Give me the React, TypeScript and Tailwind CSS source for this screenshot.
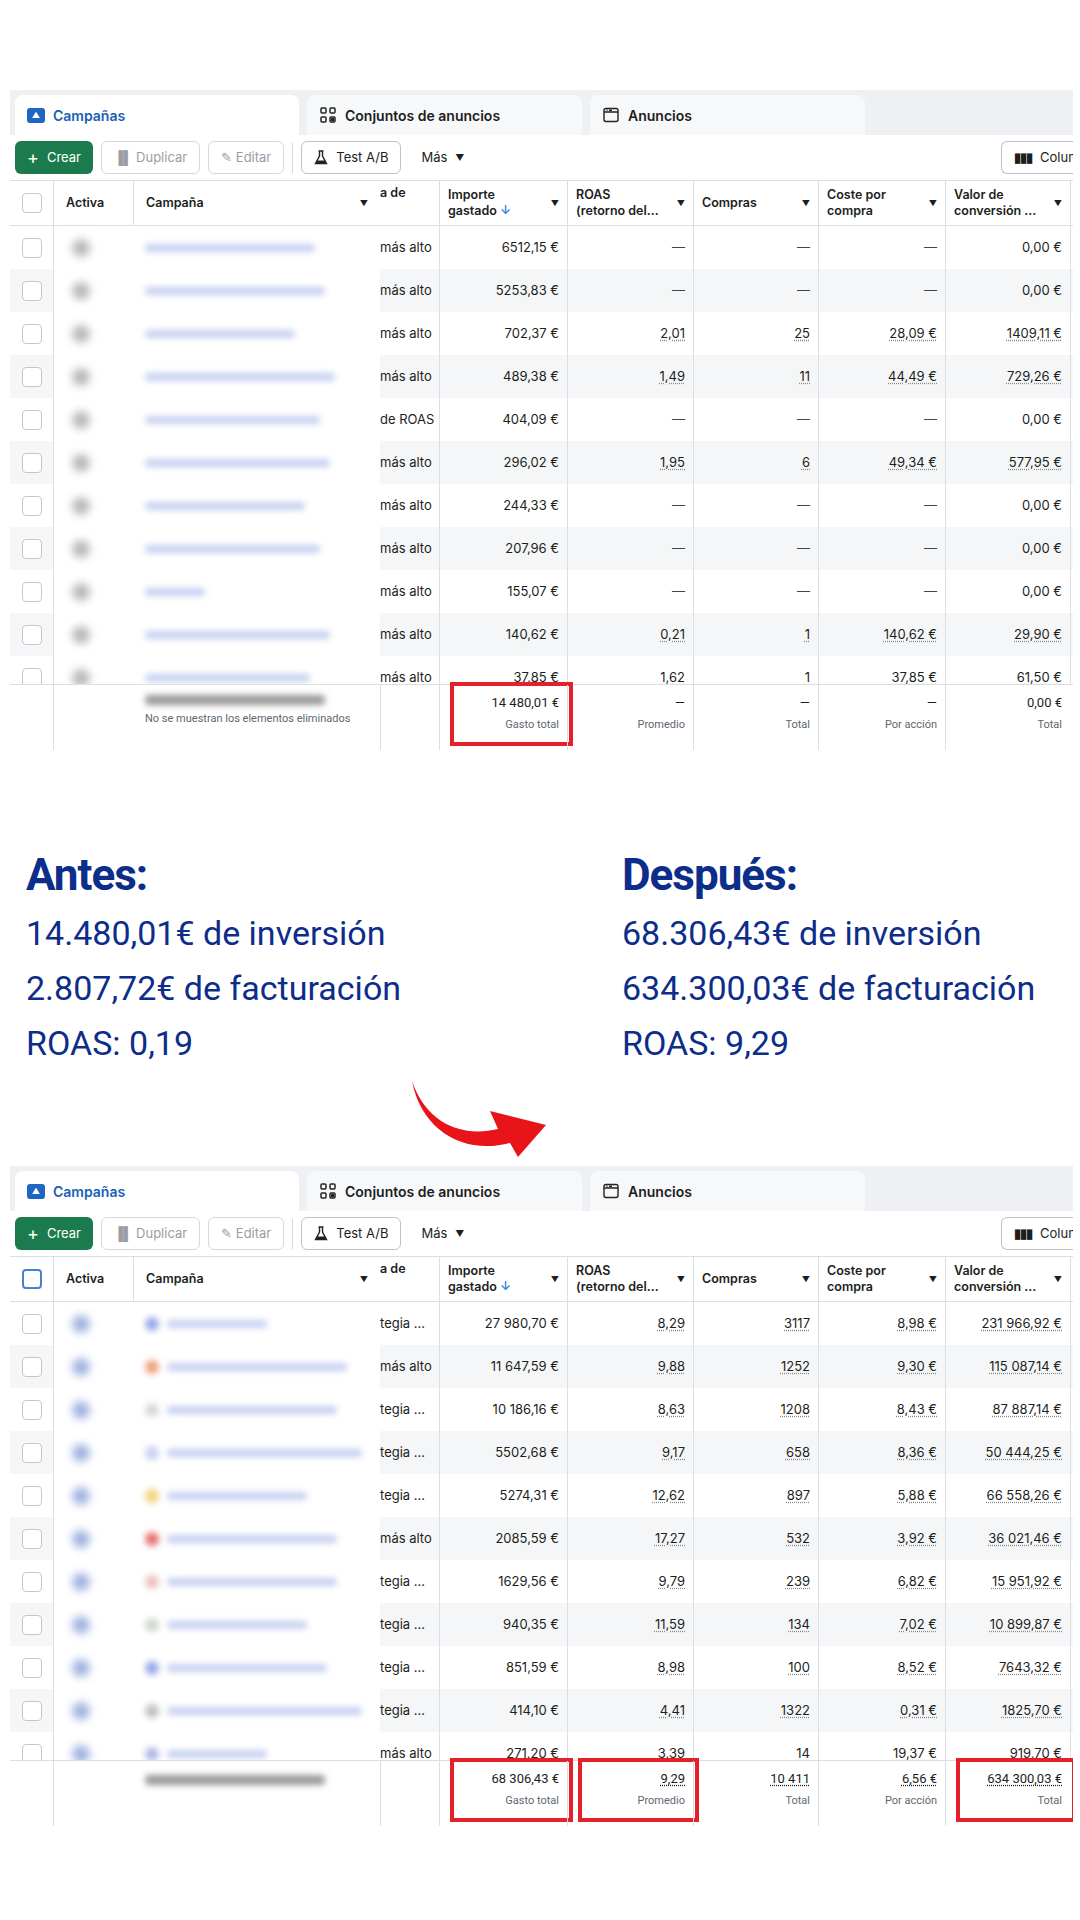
import React from "react";

type Row = { s: string; imp: string; roas: string; comp: string; coste: string; valor: string; dot?: string; bar?: number };

const top: Row[] = [
  { s: "más alto", imp: "6512,15 €", roas: "—", comp: "—", coste: "—", valor: "0,00 €", bar: 170 },
  { s: "más alto", imp: "5253,83 €", roas: "—", comp: "—", coste: "—", valor: "0,00 €", bar: 180 },
  { s: "más alto", imp: "702,37 €", roas: "2,01", comp: "25", coste: "28,09 €", valor: "1409,11 €", bar: 150 },
  { s: "más alto", imp: "489,38 €", roas: "1,49", comp: "11", coste: "44,49 €", valor: "729,26 €", bar: 190 },
  { s: "de ROAS", imp: "404,09 €", roas: "—", comp: "—", coste: "—", valor: "0,00 €", bar: 175 },
  { s: "más alto", imp: "296,02 €", roas: "1,95", comp: "6", coste: "49,34 €", valor: "577,95 €", bar: 185 },
  { s: "más alto", imp: "244,33 €", roas: "—", comp: "—", coste: "—", valor: "0,00 €", bar: 160 },
  { s: "más alto", imp: "207,96 €", roas: "—", comp: "—", coste: "—", valor: "0,00 €", bar: 175 },
  { s: "más alto", imp: "155,07 €", roas: "—", comp: "—", coste: "—", valor: "0,00 €", bar: 60 },
  { s: "más alto", imp: "140,62 €", roas: "0,21", comp: "1", coste: "140,62 €", valor: "29,90 €", bar: 185 },
  { s: "más alto", imp: "37,85 €", roas: "1,62", comp: "1", coste: "37,85 €", valor: "61,50 €", bar: 165 },
];
const bot: Row[] = [
  { s: "tegia ...", imp: "27 980,70 €", roas: "8,29", comp: "3117", coste: "8,98 €", valor: "231 966,92 €", dot: "#9aa9e8", bar: 100 },
  { s: "más alto", imp: "11 647,59 €", roas: "9,88", comp: "1252", coste: "9,30 €", valor: "115 087,14 €", dot: "#f0a080", bar: 180 },
  { s: "tegia ...", imp: "10 186,16 €", roas: "8,63", comp: "1208", coste: "8,43 €", valor: "87 887,14 €", dot: "#d8d8d8", bar: 170 },
  { s: "tegia ...", imp: "5502,68 €", roas: "9,17", comp: "658", coste: "8,36 €", valor: "50 444,25 €", dot: "#c8d0f0", bar: 195 },
  { s: "tegia ...", imp: "5274,31 €", roas: "12,62", comp: "897", coste: "5,88 €", valor: "66 558,26 €", dot: "#f5d27a", bar: 140 },
  { s: "más alto", imp: "2085,59 €", roas: "17,27", comp: "532", coste: "3,92 €", valor: "36 021,46 €", dot: "#e57070", bar: 170 },
  { s: "tegia ...", imp: "1629,56 €", roas: "9,79", comp: "239", coste: "6,82 €", valor: "15 951,92 €", dot: "#f0c0c0", bar: 170 },
  { s: "tegia ...", imp: "940,35 €", roas: "11,59", comp: "134", coste: "7,02 €", valor: "10 899,87 €", dot: "#d0d8d0", bar: 140 },
  { s: "tegia ...", imp: "851,59 €", roas: "8,98", comp: "100", coste: "8,52 €", valor: "7643,32 €", dot: "#9aa9e8", bar: 160 },
  { s: "tegia ...", imp: "414,10 €", roas: "4,41", comp: "1322", coste: "0,31 €", valor: "1825,70 €", dot: "#c0c0c0", bar: 195 },
  { s: "más alto", imp: "271,20 €", roas: "3,39", comp: "14", coste: "19,37 €", valor: "919,70 €", dot: "#b0b8e8", bar: 100 },
];

const cols = "grid grid-cols-[43px_80px_247px_59px_128px_126px_125px_127px_125px_40px]";

function Num({ v }: { v: string }) {
  if (v === "—") return <span className="text-[#444]">—</span>;
  return <span className="underline decoration-dotted decoration-[#888] underline-offset-2">{v}</span>;
}

function Box() {
  return <div className="box-border border-4 border-[#e4202a] w-full h-full" />;
}

function Panel({ rows, footer, blueCheck }: { rows: Row[]; footer: React.ReactNode; blueCheck?: boolean }) {
  const underline = rows !== top;
  return (
    <div className="ml-[10px] w-[1063px] overflow-hidden text-[13px] text-[#1c1e21]" style={{ fontFamily: "Inter, 'Noto Sans', sans-serif" }}>
      <div className="h-[45px] bg-[#eef0f3] flex items-end gap-[8px] pl-[5px]">
        <div className="h-[40px] w-[284px] bg-white rounded-t-lg flex items-center gap-2 px-3 font-semibold text-[14px] text-[#1a5fb4]">
          <span className="w-[18px] h-[15px] bg-[#1f66c1] rounded-[3px] text-white text-[8px] flex items-center justify-center">▲</span>Campañas
        </div>
        <div className="h-[40px] w-[275px] bg-[#f7f8fa] rounded-t-lg flex items-center gap-2 px-3 font-semibold text-[14px]">
          <svg width="18" height="18" viewBox="0 0 18 18" fill="none" stroke="#222" strokeWidth="1.5"><rect x="2" y="2" width="5" height="5" rx="1"/><rect x="11" y="2" width="5" height="5" rx="1"/><rect x="2" y="11" width="5" height="5" rx="1"/><rect x="11" y="11" width="5" height="5" rx="1"/><rect x="12.8" y="12.8" width="1.5" height="1.5" fill="#222"/></svg>
          Conjuntos de anuncios
        </div>
        <div className="h-[40px] w-[275px] bg-[#f7f8fa] rounded-t-lg flex items-center gap-2 px-3 font-semibold text-[14px]">
          <svg width="18" height="18" viewBox="0 0 18 18" fill="none" stroke="#222" strokeWidth="1.4"><rect x="2" y="2.5" width="14" height="13" rx="2"/><path d="M2 6h14M4.5 4.3h1M7 4.3h3"/></svg>
          Anuncios
        </div>
      </div>
      <div className="h-[45px] flex items-center gap-[8px] pl-[5px]">
        <div className="h-[33px] px-3 bg-[#1c7a4f] text-white rounded-md flex items-center gap-2"><span className="text-[18px] leading-none">+</span>Crear</div>
        <div className="h-[33px] px-3 border border-[#d6d8db] rounded-md flex items-center gap-2 text-[#9a9ea4]">▐▌ Duplicar</div>
        <div className="h-[33px] px-3 border border-[#d6d8db] rounded-md flex items-center gap-2 text-[#9a9ea4]">✎ Editar</div>
        <div className="w-px h-[30px] bg-[#d6d8db]" />
        <div className="h-[33px] px-3 border border-[#bfc2c6] rounded-md flex items-center gap-2">
          <svg width="14" height="15" viewBox="0 0 14 15"><path d="M4.5 1h5M5.5 1v5L1.5 13.5h11L8.5 6V1" fill="none" stroke="#222" strokeWidth="1.4"/><path d="M3 10.5h8l1.5 3h-11z" fill="#222"/></svg>Test A/B
        </div>
        <div className="px-3 flex items-center gap-2">Más <span className="text-[9px]">▼</span></div>
        <div className="ml-auto h-[33px] w-[72px] border border-[#bfc2c6] border-r-0 rounded-l-md flex items-center gap-2 pl-3 whitespace-nowrap overflow-hidden">
          <span className="font-bold tracking-[-1px]">▮▮▮</span>Colum
        </div>
      </div>
      <div className={`${cols} h-[46px] border-y border-[#dcdee1] font-semibold text-[12.5px] leading-[16px]`}>
        <div className="flex items-center justify-center"><span className={`w-[20px] h-[20px] rounded-[4px] border ${blueCheck ? "border-[#4a7fd6] border-2" : "border-[#c4c7cb]"}`} /></div>
        <div className="flex items-center pl-3 border-l border-[#dcdee1]">Activa</div>
        <div className="flex items-center justify-between px-3 border-l border-[#dcdee1]">Campaña<span className="text-[8px]">▼</span></div>
        <div className="pt-[4px]">a de</div>
        <div className="flex items-center justify-between px-2 border-l border-[#dcdee1]"><span>Importe<br/>gastado <span className="text-[#3b7fe0]">↓</span></span><span className="text-[8px]">▼</span></div>
        <div className="flex items-center justify-between px-2 border-l border-[#dcdee1]"><span>ROAS<br/>(retorno del...</span><span className="text-[8px]">▼</span></div>
        <div className="flex items-center justify-between px-2 border-l border-[#dcdee1]"><span>Compras</span><span className="text-[8px]">▼</span></div>
        <div className="flex items-center justify-between px-2 border-l border-[#dcdee1]"><span>Coste por<br/>compra</span><span className="text-[8px]">▼</span></div>
        <div className="flex items-center justify-between px-2 border-l border-[#dcdee1]"><span>Valor de<br/>conversión ...</span><span className="text-[8px]">▼</span></div>
        <div className="border-l border-[#dcdee1]" />
      </div>
      <div className="h-[458px] overflow-hidden">
        {rows.map((r, i) => (
          <div key={i} className={`${cols} h-[43px] ${i % 2 ? "bg-[#f5f6f7]" : "bg-white"}`}>
            <div className="flex items-center justify-center"><span className="w-[20px] h-[20px] rounded-[4px] border border-[#c4c7cb] bg-white" /></div>
            <div className="bg-white flex items-center pl-[18px] border-l border-[#dcdee1]"><span className={`w-[18px] h-[18px] rounded-full blur-[4px] ${underline ? "bg-[#9fb2e0]" : "bg-[#b8b8b8]"}`} /></div>
            <div className="bg-white flex items-center gap-2 px-3">
              {r.dot && <span className="w-[14px] h-[14px] rounded-full blur-[3px]" style={{ background: r.dot }} />}
              <span className="h-[8px] rounded blur-[3px] bg-[#c6d0f0]" style={{ width: r.bar }} />
            </div>
            <div className="flex items-center">{r.s}</div>
            <div className="flex items-center justify-end px-2 border-l border-[#dcdee1]">{r.imp}</div>
            <div className="flex items-center justify-end px-2 border-l border-[#dcdee1]"><Num v={r.roas} /></div>
            <div className="flex items-center justify-end px-2 border-l border-[#dcdee1]"><Num v={r.comp} /></div>
            <div className="flex items-center justify-end px-2 border-l border-[#dcdee1]"><Num v={r.coste} /></div>
            <div className="flex items-center justify-end px-2 border-l border-[#dcdee1]">{r.valor === "0,00 €" ? r.valor : <Num v={r.valor} />}</div>
            <div className="border-l border-[#dcdee1]" />
          </div>
        ))}
      </div>
      <div className={`${cols} h-[66px] border-t border-[#dcdee1] text-[12px]`} style={{ fontFamily: "Roboto, 'Liberation Sans', sans-serif" }}>
        {footer}
      </div>
    </div>
  );
}

function FCell({ v, l, box, u }: { v: string; l: string; box?: boolean; u?: boolean }) {
  return (
    <div className="relative border-l border-[#dcdee1] flex flex-col items-end pt-[8px] px-2">
      <span className={`text-[13px] ${u ? "underline decoration-dotted underline-offset-2" : ""}`}>{v}</span>
      <span className="text-[11px] text-[#606770] mt-[4px]">{l}</span>
      {box && <div className="absolute left-[10px] right-[-6px] top-[-3px] bottom-[4px]"><Box /></div>}
    </div>
  );
}

export default function App() {
  return (
    <div className="w-[1080px] h-[1920px] bg-white overflow-hidden">
      <div className="h-[90px]" />
      <Panel
        rows={top}
        footer={<>
          <div />
          <div className="border-l border-[#dcdee1]" />
          <div className="px-3 pt-[10px] text-[11px] text-[#606770]"><div className="h-[10px] w-[180px] bg-[#999] blur-[3px] rounded mb-[6px]" />No se muestran los elementos eliminados</div>
          <div className="border-l border-[#dcdee1]" />
          <FCell v="14 480,01 €" l="Gasto total" box />
          <FCell v="—" l="Promedio" />
          <FCell v="—" l="Total" />
          <FCell v="—" l="Por acción" />
          <FCell v="0,00 €" l="Total" />
          <div />
        </>}
      />
      <div className="h-[98px]" />
      <div className="flex text-[#0d2d8a]" style={{ fontFamily: "Roboto, 'Liberation Sans', sans-serif" }}>
        <div className="w-[622px] pl-[26px]">
          <div className="text-[44px] font-bold leading-[54px] tracking-[-1px]">Antes:</div>
          <div className="text-[34px] leading-[55px] mt-[4px]">14.480,01€ de inversión</div>
          <div className="text-[34px] leading-[55px]">2.807,72€ de facturación</div>
          <div className="text-[34px] leading-[55px]">ROAS: 0,19</div>
        </div>
        <div>
          <div className="text-[44px] font-bold leading-[54px] tracking-[-1px]">Después:</div>
          <div className="text-[34px] leading-[55px] mt-[4px]">68.306,43€ de inversión</div>
          <div className="text-[34px] leading-[55px]">634.300,03€ de facturación</div>
          <div className="text-[34px] leading-[55px]">ROAS: 9,29</div>
        </div>
      </div>
      <div className="pl-[410px] h-[95px] pt-[6px]">
        <svg width="140" height="80" viewBox="0 0 140 80">
          <path d="M2 4 C14 40 45 62 88 52 L80 34 L136 48 L108 80 L100 66 C55 78 12 55 2 4 Z" fill="#e8141a" />
        </svg>
      </div>
      <Panel
        rows={bot}
        blueCheck
        footer={<>
          <div />
          <div className="border-l border-[#dcdee1]" />
          <div className="px-3 pt-[14px]"><div className="h-[10px] w-[180px] bg-[#999] blur-[3px] rounded" /></div>
          <div className="border-l border-[#dcdee1]" />
          <FCell v="68 306,43 €" l="Gasto total" box />
          <FCell v="9,29" l="Promedio" box u />
          <FCell v="10 411" l="Total" u />
          <FCell v="6,56 €" l="Por acción" u />
          <FCell v="634 300,03 €" l="Total" box u />
          <div />
        </>}
      />
    </div>
  );
}
